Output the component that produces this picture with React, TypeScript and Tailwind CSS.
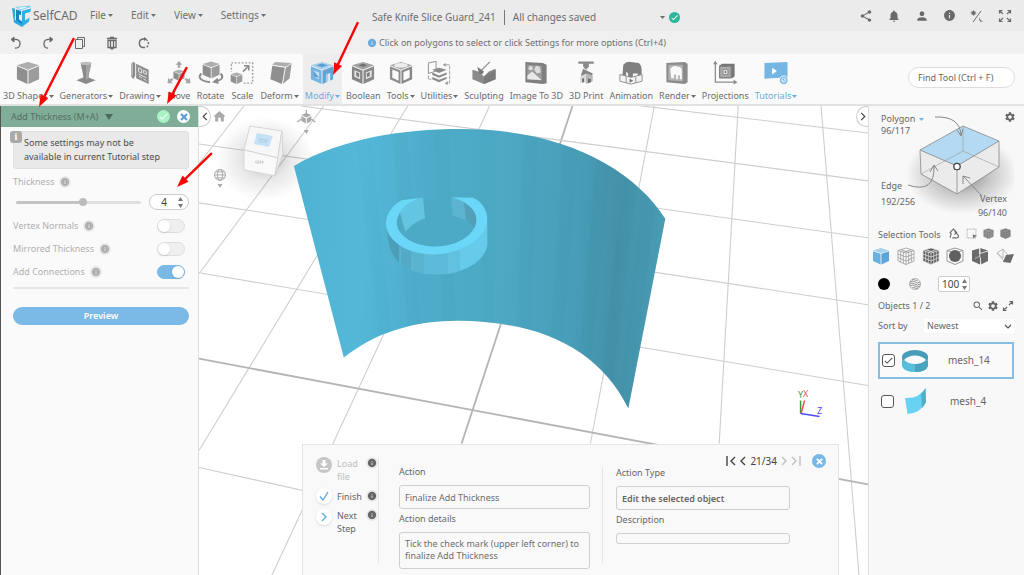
import { useState, type ReactNode } from 'react'
import { MdShare, MdNotifications, MdPerson, MdInfo, MdHome, MdSettings, MdSearch, MdCheck } from 'react-icons/md'

const G = { top: '#adadad', left: '#8f8f8f', right: '#9c9c9c' }

function Caret({ className = '' }: { className?: string }) {
  return (
    <svg viewBox="0 0 5 3" className={`h-[3px] w-[5px] shrink-0 ${className}`} aria-hidden>
      <path d="M0 0h5L2.500 3z" fill="currentColor" />
    </svg>
  )
}

function Info({ className = '' }: { className?: string }) {
  return (
    <span className={`inline-flex size-3 shrink-0 items-center justify-center rounded-full bg-[#e9e9e9] ${className}`}>
      <MdInfo className="size-[10px]" />
    </span>
  )
}

function Cube({ top = G.top, left = G.left, right = G.right }: { top?: string; left?: string; right?: string }) {
  return (
    <>
      <path d="M14 2 25.500 5.500 14 10 2.500 5.500z" fill={top} />
      <path d="M2.500 6.500 13.500 11v14L2.500 20z" fill={left} />
      <path d="M25.500 6.500 14.500 11v14l11-5z" fill={right} />
    </>
  )
}

const icons: Record<string, ReactNode> = {
  shapes: <Cube />,
  generators: (
    <>
      <path d="M4 21l8-3h4l8 3-10 4z" fill="#8a8a8a" />
      <path d="M8.500 3q5.500-2 11 0c-.5 5-2.500 9-3 17h-5C11 12 9 8 8.500 3z" fill="#8a8a8a" />
      <path d="M14 4h5c-.5 4-2.300 9-2.800 16H14z" fill="#a3a3a3" />
      <ellipse cx="14" cy="3.500" rx="5.500" ry="1.700" fill="#bdbdbd" />
    </>
  ),
  drawing: (
    <>
      <path d="M5 3.500 7 2l2 1v13l-2 4-2-3z" fill="#8a8a8a" />
      <path d="M6 3v13" stroke="#c8c8c8" />
      <path d="M10 4l13 6v15l-13-6z" fill="#8e8e8e" />
      <path d="M12.500 8l3 1.500v4l-3-1.500zM17.500 10.500l3 1.500v3l-3-1.500zM12.500 14.500l8 4M13 17l3 1.500M17.500 19.500l3 2" fill="none" stroke="#e6e6e6" />
    </>
  ),
  move: (
    <>
      <g transform="translate(7 9) scale(.5)">
        <Cube />
      </g>
      <path d="M14 1l3.500 4h-2.200v3h-2.600V5h-2.200zM2 24l1-5.500 1.500 1.700 2.200-1.600 1.500 2-2.200 1.600L7.500 24zM26 24l-1-5.500-1.500 1.700-2.200-1.600-1.500 2 2.200 1.600L20.500 24z" fill="#a6a6a6" />
    </>
  ),
  rotate: (
    <>
      <g transform="translate(3.500 0) scale(.76)">
        <Cube />
      </g>
      <path d="M4 14c-4 4-1 8 9 9M24 14c4 4 1 7-6 8.500" fill="none" stroke="#8c8c8c" strokeWidth="2" />
      <path d="M21 18.500l-6 4.500 7 2z" fill="#8c8c8c" />
    </>
  ),
  scale: (
    <>
      <rect x="3" y="3" width="22" height="21" fill="none" stroke="#9a9a9a" strokeWidth="1.500" strokeDasharray="1.800 1.800" />
      <path d="M1 12h14v14H1z" fill="#fafafa" />
      <g transform="translate(1 12) scale(.52)">
        <Cube />
      </g>
      <path d="M15 12l5-5M16 6h5v5" fill="none" stroke="#8c8c8c" strokeWidth="1.700" />
    </>
  ),
  deform: (
    <>
      <path d="M9 2l17 1-6 4L6 5z" fill={G.top} />
      <path d="M6 6l13 2-3 17-12-5z" fill={G.left} />
      <path d="M20 8l6-4-2 15-7 6z" fill={G.right} />
    </>
  ),
  modify: (
    <>
      <path d="M14 2 25.500 5.500 14 10 2.500 5.500z" fill="#a7cfec" />
      <path d="M14 3.500l6 2-6 2-6-2z" fill="#5a9fd2" />
      <path d="M2.500 6.500 13.500 11v14L2.500 20z" fill="#74b4e2" />
      <path d="M5 10.500l6 2.500v7L5 17z" fill="#c4e0f4" />
      <path d="M5 10.500l6 8L5 17z" fill="#5f9fcf" />
      <path d="M25.500 6.500 14.500 11v14l4-2v-8l4-1.500v8l3-1.500z" fill="#62a6d9" />
      <path d="M18.500 15l2-1v8l-2 1z" fill="#a7cfec" />
    </>
  ),
  boolean: (
    <>
      <Cube top="#a2a2a2" left="#868686" right="#8a8a8a" />
      <path d="M5 10.500l6 2.500v7l-6-2.700zM23 10.500 17 13v7l6-2.700z" fill="#e6e6e6" />
      <path d="M7 12.500l3 1.200v4.300l-3-1.300zM21 12.500l-3 1.200v4.300l3-1.300z" fill="#7d7d7d" />
      <path d="M14 4l4.500 1.500L14 7 9.500 5.500z" fill="#6e6e6e" />
    </>
  ),
  tools: (
    <>
      <Cube top="#a8a8a8" left="#8d8d8d" right="#858585" />
      <path d="M5 9.800l6.500 2.700v9L5 18.500zM23 9.800l-6.500 2.700v9l6.500-3z" fill="#fafafa" />
      <ellipse cx="14" cy="5.600" rx="7" ry="2.400" fill="#ededed" />
    </>
  ),
  utilities: (
    <>
      <path d="M3 3l8-1.500v10L3 14z" fill="none" stroke="#909090" />
      <path d="M7 10l7-2 8 2-8 3.500zM7 13l7 3 8-3v2l-8 3.500L7 15.500zM7 17.500l7 3 8-3v2l-8 3.500L7 20z" fill="#8b8b8b" />
      <path d="M21 5h4v19h-3M3 16v4h3" fill="none" stroke="#a0a0a0" strokeDasharray="4 1" />
      <path d="M21 3v4l-3-2zM23 22v4l-3-2z" fill="#909090" />
    </>
  ),
  sculpting: (
    <>
      <path d="M2 10l6 2 6 5 5-5 7-3v11l-12 5-12-5z" fill="#8a8a8a" />
      <path d="M14 17l12-7v10l-12 5z" fill="#7b7b7b" />
      <path d="M20 2l-9 9" stroke="#8a8a8a" strokeWidth="1.300" />
      <path d="M7 7l7 5-2 3-3-1z" fill="#777" />
    </>
  ),
  image3d: (
    <>
      <path d="M3 2l18 1 4 2v19l-4 1-18-2z" fill="#7f7f7f" />
      <path d="M5 5l15 1v15L5 20z" fill="#9c9c9c" />
      <circle cx="8.500" cy="8.500" r="2.200" fill="#ddd" />
      <path d="M14 6l4 1 1 6-4 1-3-4z" fill="#dcdcdc" />
      <path d="M5 16l5-4 10 9-15-1z" fill="#e8e8e8" />
    </>
  ),
  print3d: (
    <>
      <path d="M6 1.500h16v2.500H17v3l-3 3-3-3V4H6z" fill="#8a8a8a" />
      <path d="M9 15l2-6 10 5-1 3-6-2-5 4z" fill="#858585" />
      <path d="M8 17l6-3v9l-6 1z" fill="#dadada" />
      <path d="M14 14l7 2v6l-7 3z" fill="#b8b8b8" />
      <path d="M10 19h2v4h-2zM16 19l3 1v3l-3 1z" fill="#6d6d6d" />
    </>
  ),
  animation: (
    <>
      <path d="M6 5q3-4 8-3l8 1q3 2 3 7v8h-4v-4h-5v5h-5v-5l-2-2v5H5z" fill="#808080" />
      <path d="M2.500 15v7l11.500 3 11.500-3v-7L14 18z" fill="#f3f3f3" stroke="#909090" />
      <path d="M9 17v7M19 17v7" stroke="#909090" />
      <path d="M12.500 19.500l4 2-4 2z" fill="#777" />
    </>
  ),
  render: (
    <>
      <path d="M3 3l19-1 3 2v19l-3 2L3 23z" fill="#8a8a8a" />
      <path d="M5 5h15v17L5 21z" fill="#b3b3b3" />
      <path d="M7 9q3-4 8-2 4 0 4 4v9h-2v-4h-2v4h-2v-5h-2v4H8z" fill="#fafafa" />
    </>
  ),
  projections: (
    <>
      <path d="M4 1.500v21.500h21" fill="none" stroke="#8c8c8c" strokeWidth="1.300" />
      <path d="M1.500 4.500 4 1l2.500 3.500zM23 20.500l4 2.500-4 2.500z" fill="#8c8c8c" />
      <path d="M8 6l3-2h13v13l-3 2H8z" fill="#777" />
      <path d="M8.500 6.500h12v12h-12z" fill="#a9a9a9" stroke="#7c7c7c" />
      <path d="M12 10h5v5h-5z" fill="#ececec" stroke="#8a8a8a" />
      <circle cx="14.500" cy="12.500" r="1" fill="#666" />
    </>
  ),
  tutorials: (
    <>
      <path d="M2 3l24-1v16l-24 1.500z" fill="#74b7e4" />
      <path d="M10 8l5 3.500-5 3.500z" fill="#fff" />
      <circle cx="22" cy="21" r="4.500" fill="#74b7e4" stroke="#f9f9f9" />
      <circle cx="22" cy="21" r="2.200" fill="none" stroke="#e3f1fa" />
      <path d="M20.500 21l1 1 2-2" fill="none" stroke="#fff" />
    </>
  ),
}

const tools = [
  { label: '3D Shapes', icon: 'shapes', menu: true },
  { label: 'Generators', icon: 'generators', menu: true },
  { label: 'Drawing', icon: 'drawing', menu: true },
  { label: 'Move', icon: 'move' },
  { label: 'Rotate', icon: 'rotate' },
  { label: 'Scale', icon: 'scale' },
  { label: 'Deform', icon: 'deform', menu: true },
  { label: 'Modify', icon: 'modify', menu: true, active: true },
  { label: 'Boolean', icon: 'boolean' },
  { label: 'Tools', icon: 'tools', menu: true },
  { label: 'Utilities', icon: 'utilities', menu: true },
  { label: 'Sculpting', icon: 'sculpting' },
  { label: 'Image To 3D', icon: 'image3d' },
  { label: '3D Print', icon: 'print3d' },
  { label: 'Animation', icon: 'animation' },
  { label: 'Render', icon: 'render', menu: true },
  { label: 'Projections', icon: 'projections' },
  { label: 'Tutorials', icon: 'tutorials', menu: true, blue: true },
]

function Header() {
  return (
    <header>
      <div className="flex h-[31px] items-center bg-[#ebebeb]">
        <div className="flex flex-1 items-center">
          <a href="#" className="flex w-[78px] items-center gap-px pl-3 text-[12px] text-[#6a6a6a]">
            <svg viewBox="0 0 20 22" className="h-[22px] w-5 shrink-0" aria-hidden>
              <path d="M0 3l3 .7v11L10 19v3L2 17.500z" fill="#2fa8dc" />
              <path d="M3 2l15-1.500 1 1.500-11 3.500z" fill="#7fd3f2" />
              <path d="M4 4.500l5 1.500v4l-2-.5v5l3 2v3l-6-4z" fill="#1b86bb" />
              <path d="M10 6l9-2.500-.7 3.500-5.300 1.500v7l4.500-3-.5 4-7 5.500z" fill="#29b2e8" />
              <path d="M5 3l8-1 2 .6-6 1.400z" fill="#fff" />
            </svg>
            SelfCAD
          </a>
          <nav className="flex gap-[18px] pl-3 text-[10px] text-[#6e6e6e]">
            {['File', 'Edit', 'View', 'Settings'].map((m) => (
              <button key={m} className="flex items-center gap-[2px]">
                {m}
                <Caret />
              </button>
            ))}
          </nav>
        </div>
        <div className="flex items-center pt-1 pl-10 text-[10px] text-[#6e6e6e]">
          <span className="pr-2">Safe Knife Slice Guard_241</span>
          <span className="border-l border-[#777] pl-2">All changes saved</span>
          <button className="ml-16 flex items-center gap-1" aria-label="Save status">
            <Caret />
            <span className="flex size-[11px] items-center justify-center rounded-full bg-[#2bb59a] text-white">
              <MdCheck className="size-[9px]" />
            </span>
          </button>
        </div>
        <div className="flex flex-1 items-center justify-end gap-[14px] pr-3 text-[#6a6a6a]">
          <button aria-label="Share"><MdShare className="size-[14px]" /></button>
          <button aria-label="Notifications"><MdNotifications className="size-[14px]" /></button>
          <button aria-label="Account"><MdPerson className="size-[14px]" /></button>
          <button aria-label="Info"><MdInfo className="size-[13px]" /></button>
          <button aria-label="Theme">
            <svg viewBox="0 0 14 14" className="size-[14px]" fill="none" stroke="currentColor">
              <path d="M3 13 11 2" />
              <circle cx="3.500" cy="4" r="1.500" fill="currentColor" />
              <path d="M3.500 1v6M.5 4h6M1.500 2l4 4M5.500 2l-4 4" strokeWidth=".6" />
              <path d="M10 8.500a2.300 2.300 0 1 0 3 3.500 2.800 2.800 0 0 1-3-3.500z" fill="currentColor" stroke="none" />
            </svg>
          </button>
          <button aria-label="Full screen">
            <svg viewBox="0 0 14 14" className="size-[14px]" fill="none" stroke="currentColor" strokeWidth="1.200">
              <path d="M5 5 1.500 1.500M1.500 4.500v-3h3M9 5l3.500-3.500M9.500 1.500h3v3M5 9l-3.500 3.500M1.500 9.500v3h3M9 9l3.500 3.500M12.500 9.500v3h-3" />
            </svg>
          </button>
        </div>
      </div>

      <div className="flex h-[23px] items-center bg-[#f0f0f0] text-[#6a6a6a]">
        <div className="flex flex-1 gap-[18px] pl-[9px]">
          <button aria-label="Undo">
            <svg viewBox="0 0 14 14" className="size-[14px]" fill="none" stroke="currentColor">
              <path d="M4 3.500q7-1 7 4T6 12" strokeWidth="1.300" />
              <path d="M5 1v5L2 3.500z" fill="currentColor" />
            </svg>
          </button>
          <button aria-label="Redo">
            <svg viewBox="0 0 14 14" className="size-[14px]" fill="none" stroke="currentColor">
              <path d="M10 3.500q-7-1-7 4T7 12" strokeWidth="1.300" />
              <path d="M9 1v5l3-2.500z" fill="currentColor" />
            </svg>
          </button>
          <button aria-label="Copy">
            <svg viewBox="0 0 14 14" className="size-[14px]" fill="none" stroke="currentColor">
              <path d="M2.500 3.500h7v9h-7zM4.500 3.500v-2h7v9h-2" />
            </svg>
          </button>
          <button aria-label="Delete">
            <svg viewBox="0 0 14 14" className="size-[14px]" fill="none" stroke="currentColor">
              <path d="M2 2.500h10M5 1.500h4M3 4.500h8v7H3zM5.500 4v8M8.500 4v8" strokeWidth="1.300" />
              <path d="M4.500 12h5L7 14z" fill="currentColor" stroke="none" />
            </svg>
          </button>
          <button aria-label="Refresh">
            <svg viewBox="0 0 14 14" className="size-[14px]" fill="none" stroke="currentColor" strokeWidth="1.400">
              <path d="M8 11.500H6a4.300 4.300 0 0 1 0-8.500h2" />
              <path d="M9 3.500a4.500 4.500 0 0 1 0 8" strokeDasharray="2 1.500" />
              <path d="M7 1l3 2-3 2z" fill="currentColor" stroke="none" />
            </svg>
          </button>
        </div>
        <p className="flex items-center gap-[2px] text-[9px] text-[#6e6e6e]">
          <MdInfo className="size-[10px] text-[#68ade0]" />
          Click on polygons to select or click Settings for more options (Ctrl+4)
        </p>
        <div className="flex-1" />
      </div>

      <div className="flex h-[50px] items-center justify-between bg-[#fafafa]">
        <nav className="flex h-full gap-[2px] pl-px">
          {tools.map((t) => (
            <button
              key={t.label}
              className={`flex flex-col items-center px-[2px] pt-[6px] text-[9px] leading-4 whitespace-nowrap ${
                t.active ? 'bg-[#ededed] text-[#68ade0]' : t.blue ? 'text-[#68ade0]' : 'text-[#6c6c6c]'
              }`}
            >
              <svg viewBox="0 0 28 28" className="-mx-[2px] mb-px size-7" aria-hidden>
                {icons[t.icon]}
              </svg>
              <span className="flex items-center gap-px">
                {t.label}
                {t.menu && <Caret />}
              </span>
            </button>
          ))}
        </nav>
        <input
          aria-label="Find Tool"
          placeholder="Find Tool (Ctrl + F)"
          className="mr-[9px] mb-1 h-[21px] w-[107px] rounded-full border border-[#ddd] bg-white pl-[9px] text-[9px] text-[#666] outline-none placeholder:text-[#666]"
        />
      </div>
    </header>
  )
}

function Toggle({ label, on }: { label: string; on?: boolean }) {
  const [checked, setChecked] = useState(!!on)
  return (
    <label className="flex h-[23px] items-center text-[9px] text-[#b0b0b0]">
      {label}
      <Info className="ml-[5px]" />
      <input
        type="checkbox"
        role="switch"
        checked={checked}
        onChange={(e) => setChecked(e.target.checked)}
        className="mr-1 ml-auto h-[14px] w-7 appearance-none rounded-full border border-[#dedede] bg-[#efefef] before:block before:size-3 before:rounded-full before:bg-white before:shadow checked:border-[#7ab8e6] checked:bg-[#7ab8e6] checked:before:ml-[14px]"
      />
    </label>
  )
}

function SettingsPanel() {
  const [thickness, setThickness] = useState(4)
  return (
    <aside className="w-[199px] shrink-0 border-r border-l border-r-[#ddd] border-l-[#555] bg-[#fafafa]">
      <div className="flex h-[21px] items-center gap-[7px] bg-[#7fad97] pr-2 pl-[10px] text-[9px] text-[#566f64]">
        <h2>Add Thickness (M+A)</h2>
        <svg viewBox="0 0 8 6" className="h-[6px] w-2" aria-hidden>
          <path d="M0 0h8L4 6z" fill="#4c6a5c" />
        </svg>
        <button aria-label="Accept" className="ml-auto flex size-[13px] items-center justify-center rounded-full bg-[#a8f3c4]">
          <MdCheck className="size-[11px] text-white" />
        </button>
        <button aria-label="Cancel" className="flex size-[13px] items-center justify-center rounded-full bg-white">
          <svg viewBox="0 0 8 8" className="size-2" stroke="#5b9fd4" strokeWidth="2.200">
            <path d="M1 1l6 6M7 1 1 7" />
          </svg>
        </button>
      </div>
      <div className="pr-[9px] pl-3">
        <div className="relative mt-1 rounded-[3px] border border-[#e0e0e0] bg-[#e9e9e9] py-1 pl-[10px] text-[9px] leading-[14px] text-[#4c4c4c]">
          Some settings may not be<br />available in current Tutorial step
          <span className="absolute -top-px -left-1 flex size-3 items-center justify-center rounded-[3px] bg-[#aaa] font-['Liberation_Serif'] text-[10px] font-bold text-white">
            i
          </span>
        </div>
        <div className="flex h-[25px] items-center text-[9px] text-[#b0b0b0]">
          <label htmlFor="thickness">Thickness</label>
          <Info className="ml-[5px]" />
        </div>
        <div className="mb-1 flex h-4 items-center">
          <input
            id="thickness"
            type="range"
            min={0}
            max={7.4}
            step="any"
            value={thickness}
            onChange={(e) => setThickness(Number(e.target.value))}
            className="ml-[3px] h-[3px] min-w-0 flex-1 appearance-none rounded-full bg-linear-to-r from-[#c4c4c4] from-54% to-[#e0e0e0] to-54% [&::-webkit-slider-thumb]:size-2 [&::-webkit-slider-thumb]:appearance-none [&::-webkit-slider-thumb]:rounded-full [&::-webkit-slider-thumb]:bg-[#bdbdbd]"
          />
          <div className="ml-2 flex h-4 w-10 items-center rounded-full border border-[#ccc] bg-white pr-1">
            <input
              aria-label="Thickness value"
              value={thickness}
              onChange={(e) => setThickness(Number(e.target.value))}
              className="w-7 min-w-0 text-center text-[10px] text-[#444] outline-none"
            />
            <svg viewBox="0 0 5 11" className="h-[11px] w-[5px]" fill="#777" aria-hidden>
              <path d="M0 4h5L2.500 0zM0 7h5l-2.500 4z" />
            </svg>
          </div>
        </div>
        <Toggle label="Vertex Normals" />
        <Toggle label="Mirrored Thickness" />
        <Toggle label="Add Connections" on />
        <hr className="mt-1 border-t-2 border-[#e6e6e6]" />
        <button className="mt-[18px] h-[18px] w-full rounded-full bg-[#7bb9e6] text-[9px] font-semibold text-white">Preview</button>
      </div>
    </aside>
  )
}

// gridlines, page space: [x1, y1, x2, y2, major]
const gridLines: number[][] = [
  [243, 105, 198, 163, 0],
  [323, 105, 198, 273, 0],
  [407, 105, 198, 450, 0],
  [489, 105, 271, 575, 0],
  [572, 105, 461, 443, 1],
  [654, 105, 590, 443, 0],
  [738, 105, 719, 443, 0],
  [821, 105, 859, 575, 0],
  [625, 103, 868, 132, 0],
  [300, 105, 868, 180, 0],
  [198, 143, 868, 237, 0],
  [198, 202, 868, 304, 0],
  [198, 272, 868, 385, 0],
  [198, 358, 868, 484, 1],
  [198, 467, 500, 534, 0],
]

// top x, bottom x of each facet seam on the curved sheet
const facets = [
  [352, 388], [390, 414], [432, 447], [480, 481], [524, 513], [565, 545], [600, 573], [630, 596], [652, 616],
]

const sheet =
  'M293 165C340 138 400 128 460 128C560 128 632 166 665 218L628 408C600 350 540 320 457 320C415 320 375 331 343 357Z'

function Scene() {
  return (
    <svg viewBox="198 105 670 470" preserveAspectRatio="xMinYMin slice" className="absolute inset-0 size-full" aria-label="Model view">
      <defs>
        <linearGradient id="sheet" x1="293" x2="665" y1="200" y2="214" gradientUnits="userSpaceOnUse">
          <stop offset="0" stopColor="#4fb2d2" />
          <stop offset=".18" stopColor="#54b8d9" />
          <stop offset=".36" stopColor="#4eacca" />
          <stop offset=".55" stopColor="#4da9c5" />
          <stop offset=".75" stopColor="#489eb8" />
          <stop offset=".87" stopColor="#4492aa" />
          <stop offset="1" stopColor="#489cb4" />
        </linearGradient>
        <radialGradient id="shade">
          <stop offset="0" stopColor="#000" stopOpacity=".26" />
          <stop offset=".5" stopColor="#000" stopOpacity=".09" />
          <stop offset="1" stopColor="#000" stopOpacity="0" />
        </radialGradient>
        <clipPath id="sheetClip">
          <path d={sheet} />
        </clipPath>
        <clipPath id="wallClip">
          <path d="M316 370L325 432C340 495 400 521 470 522C550 520 615 480 621 430L620 350Z" />
        </clipPath>
      </defs>
      {gridLines.map(([x1, y1, x2, y2, major], i) => (
        <line key={i} x1={x1} y1={y1} x2={x2} y2={y2} stroke={major ? '#b4b4b4' : '#cecece'} strokeWidth={major ? 1.8 : 1.1} />
      ))}

      {/* view cube */}
      <ellipse cx="264" cy="158" rx="50" ry="42" fill="url(#shade)" />
      <g stroke="#d5d5d5" strokeLinejoin="round">
        <path d="M249 125l32 5-4 27-34-8z" fill="#f7f7f7" />
        <path d="M243 149l34 8-3 18-31-6z" fill="#f9f9f9" />
        <path d="M281 130l1 23-8 22 3-18z" fill="#efefef" />
      </g>
      <path d="M256 132l16 3-4 11-15-3z" fill="#c4e2f5" />
      <text x="257" y="141" fontSize="5" fill="#9dbacd" transform="rotate(8 257 141)">TOP</text>
      <text x="254" y="162" fontSize="4" fill="#888" transform="rotate(8 254 162)">LEFT</text>

      <g fill="#aaa">
        <path d="M305.500 109v6m-5 3-4 3m14-3 4 3" stroke="#aaa" strokeWidth="1.300" />
        <path d="M300.500 114l5-2 5 2-5 2.500zM300.500 115l4.500 2.500v5l-4.500-2.500zM310.500 115l-4.500 2.500v5l4.500-2.500z" />
        <path d="M303 129h5l-2.500 4zM216.500 183h5l-2.500 4z" />
        <g fill="none" stroke="#aaa">
          <circle cx="219" cy="174" r="5.500" />
          <ellipse cx="219" cy="174" rx="2.500" ry="5.500" />
          <path d="M213.500 174h11M214.500 171h9M214.500 177h9" />
        </g>
      </g>

      <path d={sheet} fill="url(#sheet)" />
      <g clipPath="url(#sheetClip)" fill="#0b3a4a">
        {facets.map(([a, b]) => (
          <path key={a} d={`M${a} 110L${b} 420H${b + 12}L${a + 15} 110Z`} opacity=".015" />
        ))}
      </g>

      <g transform="translate(280 100) scale(.3333)">
        <g clipPath="url(#wallClip)">
          <path d="M300 340H640V530H300z" fill="#5cbbd8" />
          <path d="M300 340H356V530H300z" fill="#4b9db8" />
          <path d="M356 340H392V530H362z" fill="#54aac5" />
          <path d="M392 340H430V530H396z" fill="#5ab4cf" />
          <path d="M500 340H535V530H502z" fill="#61c1de" />
          <path d="M535 340H640V530H538z" fill="#66cbea" />
        </g>
        {/* sheet seen through the ring */}
        <path d="M348 360C360 315 400 310 430 300L515 300C560 300 590 330 588 360C582 410 520 438 460 438C400 436 345 405 348 360Z" fill="#4daac7" />
        <path d="M348 360C355 322 390 300 427 291L433 352C405 362 385 378 366 402Q346 384 348 360Z" fill="#63c5e2" />
        <path d="M348 360Q350 346 358 336L374 393 366 402Q346 384 348 360Z" fill="#4fa8c2" />
        <path d="M512 289C560 300 590 330 588 360L584 382C565 362 545 352 516 345Z" fill="#5cb4d0" />
        <path d="M550 306C575 320 590 335 588 360L584 382 556 358Z" fill="#519fb8" />
        <path d="M425 291L362 298C330 315 312 350 316 375C325 430 390 461 460 461C550 458 622 410 620 350C618 322 600 302 578 291L512 289C560 300 590 330 588 360C582 410 520 438 460 438C400 436 345 405 348 360C355 322 390 300 425 291Z" fill="#6bd7f8" />
      </g>

      {/* axis gizmo */}
      <g fill="none" strokeWidth="1.500">
        <path d="M800.500 400v13" stroke="#3c9a3c" />
        <path d="M801 413l3.500-13" stroke="#f05050" />
        <path d="M800.500 413l19 3" stroke="#4b4bf0" />
      </g>
      <g fontSize="9">
        <text x="798" y="397" fill="#3c9a3c">Y</text>
        <text x="803" y="396" fill="#f05050">X</text>
        <text x="817" y="413" fill="#4b4bf0">Z</text>
      </g>
    </svg>
  )
}

function Field({ id, label, children }: { id: string; label: string; children: ReactNode }) {
  return (
    <div className="flex flex-col">
      <label htmlFor={id} className="mb-[3px] leading-5">
        {label}
      </label>
      {children}
    </div>
  )
}

function TutorialPanel() {
  return (
    <section className="absolute right-[29px] bottom-0 left-[103px] flex h-[131px] border border-b-0 border-[#e4e4e4] bg-[#f9f9f9] text-[9px] text-[#666]">
      <div className="mt-3 mb-3 flex w-[76px] shrink-0 flex-col gap-2 border-r border-[#e6e6e6] pl-[13px] leading-[13px]">
        <div className="flex items-start text-[#bdbdbd]">
          <button aria-label="Load file" className="mr-[5px] flex size-4 shrink-0 items-center justify-center rounded-full bg-[#c6c6c6]">
            <svg viewBox="0 0 10 10" className="size-[10px]" fill="#fff">
              <path d="M3.500 0h3v3.500H9L5 7 1 3.500h2.500zM1 8h8v1.500H1z" />
            </svg>
          </button>
          <span className="w-7">Load file</span>
          <Info className="ml-px text-[#666]" />
        </div>
        <div className="-mt-[3px] flex items-center">
          <button aria-label="Finish" className="mr-[5px] flex size-4 shrink-0 items-center justify-center rounded-full bg-white shadow">
            <svg viewBox="0 0 10 10" className="size-[10px]" fill="none" stroke="#62abe0" strokeWidth="1.400">
              <path d="M1 5.500l3 3.500L9 1" />
            </svg>
          </button>
          <span className="w-7">Finish</span>
          <Info className="ml-px text-[#666]" />
        </div>
        <div className="-mt-[3px] flex items-start">
          <button aria-label="Next step" className="mr-[5px] flex size-4 shrink-0 items-center justify-center rounded-full bg-white shadow">
            <svg viewBox="0 0 10 10" className="size-[10px]" fill="none" stroke="#62abe0" strokeWidth="1.400">
              <path d="M3 1l4 4-4 4" />
            </svg>
          </button>
          <span className="w-7">Next Step</span>
          <Info className="ml-px text-[#666]" />
        </div>
      </div>

      <div className="mt-[17px] flex min-w-0 flex-[191] flex-col pr-3 pl-5">
        <Field id="action" label="Action">
          <input id="action" readOnly defaultValue="Finalize Add Thickness" className="h-6 w-full rounded-[3px] border border-[#cfcfcf] px-[5px] text-[#6e6e6e]" />
        </Field>
        <Field id="details" label="Action details">
          <textarea
            id="details"
            readOnly
            defaultValue="Tick the check mark (upper left corner) to finalize Add Thickness"
            className="h-[37px] w-full resize-none overflow-hidden rounded-[3px] border border-[#cfcfcf] px-[5px] py-[5px] leading-3 text-[#6e6e6e]"
          />
        </Field>
      </div>

      <div className="mt-[22px] mb-3 w-px bg-[#e6e6e6]" />

      <div className="flex min-w-0 flex-[174] flex-col pr-12 pl-[13px]">
        <nav className="mt-[9px] -mr-10 -mb-[5px] flex h-[14px] items-center justify-end gap-[3px] text-[10px] text-[#444]">
          <button aria-label="First">
            <svg viewBox="0 0 10 10" className="size-[10px]" fill="none" stroke="currentColor" strokeWidth="1.400"><path d="M1 0v10M9 1 5 5l4 4" /></svg>
          </button>
          <button aria-label="Previous">
            <svg viewBox="0 0 8 10" className="h-[10px] w-2" fill="none" stroke="currentColor" strokeWidth="1.400"><path d="M6 1 2 5l4 4" /></svg>
          </button>
          <span>21/34</span>
          <button aria-label="Next">
            <svg viewBox="0 0 8 10" className="h-[10px] w-2" fill="none" stroke="#c0c0c0" strokeWidth="1.400"><path d="M2 1l4 4-4 4" /></svg>
          </button>
          <button aria-label="Last">
            <svg viewBox="0 0 10 10" className="size-[10px]" fill="none" stroke="#c0c0c0" strokeWidth="1.400"><path d="M1 1l4 4-4 4M9 0v10" /></svg>
          </button>
          <button aria-label="Close" className="mr-1 ml-2 flex size-[14px] items-center justify-center rounded-full bg-[#78b8e6]">
            <svg viewBox="0 0 8 8" className="size-[7px]" stroke="#fff" strokeWidth="2.200"><path d="M1 1l6 6M7 1 1 7" /></svg>
          </button>
        </nav>
        <Field id="type" label="Action Type">
          <input id="type" readOnly defaultValue="Edit the selected object" className="h-6 w-full rounded-[3px] border border-[#cfcfcf] px-[5px] font-semibold" />
        </Field>
        <Field id="description" label="Description">
          <input id="description" readOnly className="h-[11px] w-full rounded-[3px] border border-[#cfcfcf]" />
        </Field>
      </div>
    </section>
  )
}

function Viewport() {
  return (
    <main className="relative min-w-0 flex-1 overflow-hidden bg-white">
      <Scene />
      <button aria-label="Collapse settings" className="absolute top-0 left-0 flex h-[21px] w-3 items-center justify-center rounded-r-full border border-l-0 border-[#ccc] bg-white">
        <svg viewBox="0 0 6 10" className="h-[9px] w-[6px]" fill="none" stroke="#444" strokeWidth="1.300"><path d="M5 1 1 5l4 4" /></svg>
      </button>
      <button aria-label="Home view" className="absolute top-[3px] left-[13px] text-[#aaa]">
        <MdHome className="size-[15px]" />
      </button>
      <button aria-label="Collapse objects" className="absolute top-0 right-0 flex h-[21px] w-3 items-center justify-center rounded-l-full border border-r-0 border-[#ccc] bg-white">
        <svg viewBox="0 0 6 10" className="h-[9px] w-[6px]" fill="none" stroke="#444" strokeWidth="1.300"><path d="M1 1l4 4-4 4" /></svg>
      </button>
      <TutorialPanel />
    </main>
  )
}

const K = '#6b6b6b'

function MeshCube({ fill, line }: { fill: string; line: string }) {
  return (
    <g fill={fill} stroke={line} strokeLinejoin="round" strokeWidth=".8">
      <path d="M9 1l8 2.500v10.500l-8 3.500-8-3.500V3.500z" />
      <path d="M1 3.500 9 6l8-2.500M9 6v11.500M1 7l8 3 8-3M1 10.500l8 3.500 8-3.500M3.700 4.300v10.500M6.300 5v11M11.700 5v11M14.300 4.300v10.500M3.700 2.700l8 2.500M14.300 2.700l-8 2.500" fill="none" />
    </g>
  )
}

const modes: { name: string; icon: ReactNode }[] = [
  {
    name: 'Object',
    icon: <g><path d="M9 1l8 2.500L9 6 1 3.500z" fill="#a5d0ef" /><path d="M1 4.200l7.600 2.500v10.800L1 14z" fill="#6bb2e4" /><path d="M17 4.200 9.400 6.700v10.800L17 14z" fill="#5aa5da" /></g>,
  },
  { name: 'Wireframe', icon: <MeshCube fill="#fafafa" line="#999" /> },
  { name: 'Mesh', icon: <MeshCube fill="#5c5c5c" line="#ddd" /> },
  {
    name: 'Sphere',
    icon: <g><path d="M9 1l8 2.500v10.500l-8 3.500-8-3.500V3.500zM1 3.500 9 6l8-2.500" fill="none" stroke="#999" /><circle cx="9" cy="9" r="6" fill="#606060" /></g>,
  },
  {
    name: 'Region',
    icon: <g fill={K}><path d="M1 3.500 8 1.500V9l1 1v7.500L1 14z" /><path d="M9 1l8 2.500L9.500 6zM17 4.500v9.500l-7 3.500V11L8.500 9.500V7z" /><path d="M9 1v8L4 11.500M9 9l1 8" fill="none" stroke="#ccc" strokeWidth=".7" /></g>,
  },
  {
    name: 'Face',
    icon: <g><path d="M1 6l6-4v9zM1 6l7 8 4-6-5-6" fill="none" stroke="#aaa" strokeWidth=".8" /><path d="M10 8l8-1-3.500 9-7.500-1z" fill={K} /></g>,
  },
]

function ObjectsPanel() {
  return (
    <aside className="flex w-[156px] shrink-0 flex-col border-l border-[#ddd] bg-[#f8f8f8] px-[10px] text-[9px] text-[#666]">
      <div className="relative -ml-px h-[121px]">
        <svg viewBox="878 106 136 121" className="absolute top-0 left-0 h-[121px] w-[136px]" aria-hidden>
          <defs>
            <radialGradient id="boxShade">
              <stop offset="0" stopColor="#000" stopOpacity=".5" />
              <stop offset=".5" stopColor="#000" stopOpacity=".2" />
              <stop offset="1" stopColor="#000" stopOpacity="0" />
            </radialGradient>
          </defs>
          <ellipse cx="962" cy="174" rx="56" ry="40" fill="url(#boxShade)" />
          <path d="M920 150l37 16 42-25v26l-42 27-36-20z" fill="#ebebeb" />
          <path d="M963 126l36 15-42 25-37-16z" fill="#b4daf3" />
          <path d="M920 150l43-24 36 15v26l-42 27-36-20zM920 150l37 16 42-25M957 166v28" fill="none" stroke="#888" strokeWidth=".8" />
          <path d="M963 126v25l-42 23M963 151l36 16" fill="none" stroke="#999" strokeWidth=".6" />
          <g fill="none" stroke="#888">
            <path d="M935 117q25-1 26 18M957 130l4 6 2-7M908 185q27 9 26-19M930 172l4-7 4 6M982 196l-19-20M963 184v-8l7 2" />
          </g>
          <circle cx="957" cy="166.500" r="3.200" fill="#fff" stroke="#444" strokeWidth="1.300" />
        </svg>
        <button className="absolute top-[7px] left-[3px] text-left leading-[12px]">
          <span className="flex items-center gap-1">
            Polygon <Caret className="text-[#74b4e2]" />
          </span>
          96/117
        </button>
        <div className="absolute top-[72px] left-[3px] leading-4">
          Edge<br />192/256
        </div>
        <div className="absolute top-[86px] right-[7px] text-right leading-[14px]">
          Vertex<br />96/140
        </div>
        <button aria-label="Selection settings" className="absolute top-[5px] -right-[2px]">
          <MdSettings className="size-3" />
        </button>
      </div>
      <div className="flex h-[13px] items-center">
        <h3 className="-ml-px pt-[3px]">Selection Tools</h3>
        <div className="mr-[3px] ml-auto flex gap-[6px]">
          <svg viewBox="0 0 10 10" className="size-[11px]" fill="none" stroke={K} aria-hidden><path d="M1 9l1-4-1-1 3-3 3 3-2 2M5 3l3 3q2 3-2 3H3" /></svg>
          <svg viewBox="0 0 10 10" className="size-[11px]" fill="none" stroke="#aaa" aria-hidden><path d="M1 1h8v8H1z" strokeDasharray="1 1" /><path d="M6 6l4 1-2 1-1 2z" fill={K} stroke="none" /></svg>
          <svg viewBox="0 0 18 18" className="size-[11px]" aria-hidden><MeshCube fill="#777" line="#aaa" /></svg>
          <svg viewBox="0 0 18 18" className="size-[11px]" aria-hidden><MeshCube fill="#777" line="#999" /></svg>
        </div>
      </div>
      <div className="-ml-[7px] flex h-8 items-center justify-between">
        {modes.map((m) => (
          <button key={m.name} aria-label={m.name}>
            <svg viewBox="0 0 18 18" className="size-[18px]">{m.icon}</svg>
          </button>
        ))}
      </div>
      <div className="-ml-px flex h-6 items-center">
        <button aria-label="Solid" className="size-3 rounded-full bg-black" />
        <button aria-label="Textured" className="ml-[19px]">
          <svg viewBox="0 0 12 12" className="size-3" fill="none" stroke="#777" strokeWidth=".8">
            <circle cx="6" cy="6" r="5.500" strokeDasharray="1 .6" />
            <path d="M1 4q2.500-2 5 0t5 0M.5 6q2.500-2 5 0t6 0M1 8q2.500-2 5 0t5 0M3 2q1.500-1 3 0t3 0M3 10q1.500-1 3 0t3 0" />
          </svg>
        </button>
        <div className="ml-[17px] flex h-4 w-8 items-center rounded-[2px] border border-[#ccc] bg-white pr-[2px] pl-[3px]">
          <input aria-label="Opacity" defaultValue="100" className="w-5 min-w-0 text-[10px] text-[#444] outline-none" />
          <svg viewBox="0 0 5 11" className="h-[11px] w-[5px]" fill="#777" aria-hidden><path d="M0 4h5L2.500 0zM0 7h5l-2.500 4z" /></svg>
        </div>
      </div>
      <div className="-ml-px flex h-5 items-center">
        <h3>Objects 1 / 2</h3>
        <div className="ml-auto flex gap-[3px]">
          <button aria-label="Search"><MdSearch className="size-3" /></button>
          <button aria-label="Settings"><MdSettings className="size-3" /></button>
          <button aria-label="Expand">
            <svg viewBox="0 0 12 12" className="size-3" fill="none" stroke="currentColor" strokeWidth="1.200">
              <path d="M5 7l-3.500 3.500M1.500 7.500v3h3M7 5l3.500-3.500M7.500 1.500h3v3" />
            </svg>
          </button>
        </div>
      </div>
      <div className="-ml-px flex h-5 items-center">
        <label htmlFor="sort">Sort by</label>
        <div className="relative ml-auto h-[14px] w-[90px]">
          <select id="sort" className="block h-[14px] w-full appearance-none bg-white pl-[3px] leading-[14px] outline-none">
            <option>Newest</option>
            <option>Oldest</option>
          </select>
          <svg viewBox="0 0 8 5" className="pointer-events-none absolute top-[5px] right-[2px] h-[5px] w-2" fill="none" stroke="#555" strokeWidth="1.200">
            <path d="M1 1l3 3 3-3" />
          </svg>
        </div>
      </div>
      <ul className="mt-[6px] -ml-px text-[10px]">
        <li>
          <label className="flex h-[37px] items-center border-2 border-[#86bde3] bg-[#fafafa] pl-[2px]">
            <input
              type="checkbox"
              defaultChecked
              className="peer size-[13px] appearance-none rounded-[3px] border border-[#555] bg-white"
            />
            <MdCheck className="-ml-[12px] size-[11px] text-[#444] opacity-0 peer-checked:opacity-100" />
            <svg viewBox="0 0 26 22" className="mr-5 ml-[8px] h-[22px] w-[26px]" aria-hidden>
              <path d="M0 6v10q2 6 13 6t13-6V6z" fill="#58bedd" />
              <path d="M13 11h13v5q-2 6-13 6z" fill="#48a5c2" />
              <ellipse cx="13" cy="7" rx="13" ry="7" fill="#479db9" />
              <path d="M2 10q4-4.500 11-4.500T24 10q-4 4-11 4T2 10z" fill="#fafafa" />
            </svg>
            mesh_14
          </label>
        </li>
        <li>
          <label className="flex h-[44px] items-center pl-[3px]">
            <input type="checkbox" className="size-[13px] appearance-none rounded-[3px] border border-[#555] bg-white checked:bg-[#74b4e2]" />
            <svg viewBox="0 0 21 26" className="mr-6 ml-[11px] h-[26px] w-[21px]" aria-hidden>
              <path d="M0 10q14 1 20.500-10l.5 14q-5 11-18.500 12z" fill="#68d2f2" />
              <path d="M16 6q3-3 4.500-6l.5 14q-2 4-4 6z" fill="#50aec9" />
            </svg>
            mesh_4
          </label>
        </li>
      </ul>
    </aside>
  )
}

const arrows = [
  [74, 38, 39, 107],
  [187, 67, 167, 104],
  [358, 22, 333, 75],
  [212, 153, 177, 187],
]

function Arrows() {
  return (
    <svg viewBox="0 0 1024 575" className="pointer-events-none absolute top-0 left-0 h-[575px] w-[1024px]" aria-hidden>
      {arrows.map(([x1, y1, x2, y2]) => {
        const angle = (Math.atan2(y2 - y1, x2 - x1) * 180) / Math.PI
        const len = Math.hypot(x2 - x1, y2 - y1)
        return (
          <g key={x1} transform={`translate(${x1} ${y1}) rotate(${angle})`} fill="#fb0404">
            <rect x="0" y="-1.200" width={len - 8} height="2.400" rx="1" />
            <path d={`M${len} 0l-12-4.300v8.600z`} />
          </g>
        )
      })}
    </svg>
  )
}

export default function App() {
  return (
    <div className="relative flex min-h-screen flex-col overflow-hidden bg-white font-['Noto_Sans','Open_Sans',sans-serif]">
      <Header />
      <div className="flex flex-1 border-t-2 border-[#e2e2e2]">
        <SettingsPanel />
        <Viewport />
        <ObjectsPanel />
      </div>
      <Arrows />
    </div>
  )
}
